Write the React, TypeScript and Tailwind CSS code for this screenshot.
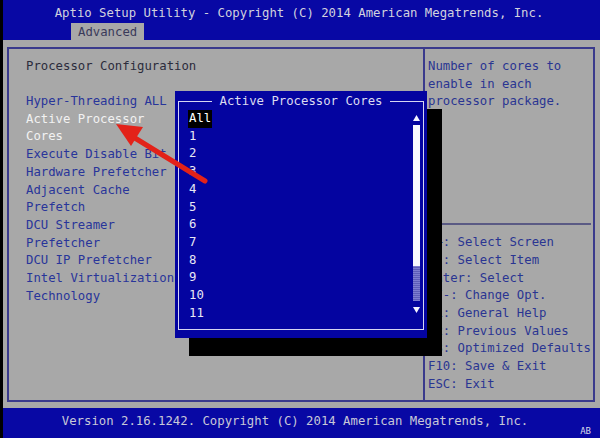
const leftItems = [
    { label: "Hyper-Threading ALL" },
    { label: "Active Processor", active: true },
    { label: "Cores", active: true },
    { label: "Execute Disable Bit" },
    { label: "Hardware Prefetcher" },
    { label: "Adjacent Cache" },
    { label: "Prefetch" },
    { label: "DCU Streamer" },
    { label: "Prefetcher" },
    { label: "DCU IP Prefetcher" },
    { label: "Intel Virtualization" },
    { label: "Technology" },
]

const helpLines = [
    "\u2192\u2190: Select Screen",
    "\u2191\u2193: Select Item",
    "Enter: Select",
    "+/-: Change Opt.",
    "F1: General Help",
    "F2: Previous Values",
    "F3: Optimized Defaults",
    "F10: Save & Exit",
    "ESC: Exit",
]

const cores = ["All", "1", "2", "3", "4", "5", "6", "7", "8", "9", "10", "11"]

function CoresPopup() {
    return (
        <>
            {/* Drop shadow */}
            <div className="absolute left-[186px] top-[109px] w-[253px] h-[247px] bg-black z-10" />

            {/* Popup */}
            <div className="absolute left-[172px] top-[91px] w-[252px] h-[247px] bg-[#0404a0] z-20">
                <div className="absolute left-[3px] right-[3px] top-[10px] bottom-[8px] border-[1.5px] border-[#d6d6f2]" />

                {/* Title cut into the frame */}
                <div className="absolute left-0 right-0 top-[2px] flex justify-center">
                    <span className="bg-[#0404a0] px-[8px] leading-[17.7px] text-[#dcdcf0]">
                        Active Processor Cores
                    </span>
                </div>

                {/* Options */}
                <div className="absolute left-[14px] top-[19px] flex flex-col leading-[17.7px] text-[#e8e8f4]">
                    {cores.map((c, i) => (
                        <span key={c} className="flex">
                            <span className={i === 0 ? "bg-black text-white px-px -ml-px" : ""}>{c}</span>
                        </span>
                    ))}
                </div>

                {/* Scrollbar */}
                <div className="absolute left-[238px] top-[24px] w-[7px] flex flex-col items-center">
                    <svg width="7" height="6" viewBox="0 0 7 6">
                        <polygon points="3.5,0 7,6 0,6" fill="#f4f4ff" />
                    </svg>
                    <div className="w-[7px] h-[141px] mt-[4px] bg-[#f8f8ff]" />
                    <div className="w-[7px] h-[35px] bg-[repeating-linear-gradient(0deg,#7c7cd0_0px,#7c7cd0_1px,#5c5cb8_1px,#5c5cb8_2px)]" />
                    <svg width="7" height="6" viewBox="0 0 7 6" className="mt-[6px]">
                        <polygon points="0,0 7,0 3.5,6" fill="#f4f4ff" />
                    </svg>
                </div>
            </div>
        </>
    )
}

export default function App() {
    return (
        <div
            className="relative w-[600px] h-[438px] overflow-hidden flex flex-col border-l-[3px] border-black text-[12.3px]"
            style={{ fontFamily: '"DejaVu Sans Mono", "Liberation Mono", monospace' }}
        >
            {/* Title bar */}
            <div className="h-[40px] bg-[#0808a4] flex flex-col -ml-[3px]">
                <div className="pt-[5px] leading-[17.7px] text-center text-[#d2d2de] pr-[2px]">
                    Aptio Setup Utility - Copyright (C) 2014 American Megatrends, Inc.
                </div>
                <div className="ml-[71px] mt-auto h-[19px] w-[73px] bg-[#a8a8a8] px-[7px] leading-[19px] text-[#3a3a5a]">
                    Advanced
                </div>
            </div>

            {/* Main area */}
            <div className="flex-1 bg-[#a8a8a8] pl-[4px] pr-[5px] pt-[7px] pb-[6px] flex">
                <div className="flex-1 flex border-2 border-[#3a3a8c]">
                    {/* Left column */}
                    <div className="w-[414px] pl-[17px] pt-[9px] leading-[17.7px] flex flex-col">
                        <span className="text-[#2c2c3c]">Processor Configuration</span>
                        <div className="mt-[17.3px] flex flex-col">
                            {leftItems.map((item) => (
                                <span
                                    key={item.label}
                                    className={item.active ? "text-[#f2f2f2]" : "text-[#28359a]"}
                                >
                                    {item.label}
                                </span>
                            ))}
                        </div>
                    </div>

                    {/* Right column */}
                    <div className="flex-1 border-l-2 border-[#3a3a8c] pl-[3px] pr-[2px] pt-[9px] leading-[17.7px] flex flex-col text-[#2a3592]">
                        <span>Number of cores to</span>
                        <span>enable in each</span>
                        <span>processor package.</span>
                        <div className="mt-[112px] ml-[2px] h-[2px] bg-[#5a5a84]" />
                        <div className="mt-[9px] flex flex-col">
                            {helpLines.map((line) => (
                                <span key={line} className="whitespace-nowrap">{line}</span>
                            ))}
                        </div>
                    </div>
                </div>
            </div>

            {/* Footer */}
            <div className="h-[30px] bg-[#0808a4] flex flex-col -ml-[3px]">
                <div className="pt-[5px] pr-[10px] leading-[17.7px] text-center text-[#c8c8d8]">
                    Version 2.16.1242. Copyright (C) 2014 American Megatrends, Inc.
                </div>
                <div className="-mt-[4px] pr-[9px] text-right text-[9px] leading-[9px] text-[#d8d8e8]">AB</div>
            </div>

            <CoresPopup />

            {/* Red annotation arrow */}
            <svg
                className="absolute left-[-3px] top-0 z-30 pointer-events-none"
                width="600"
                height="438"
                viewBox="0 0 600 438"
            >
                <line x1="205" y1="181" x2="130" y2="135" stroke="#e32219" strokeWidth="5" strokeLinecap="round" />
                <polygon points="116,124 131,146 143,127" fill="#e32219" />
            </svg>
        </div>
    )
}
